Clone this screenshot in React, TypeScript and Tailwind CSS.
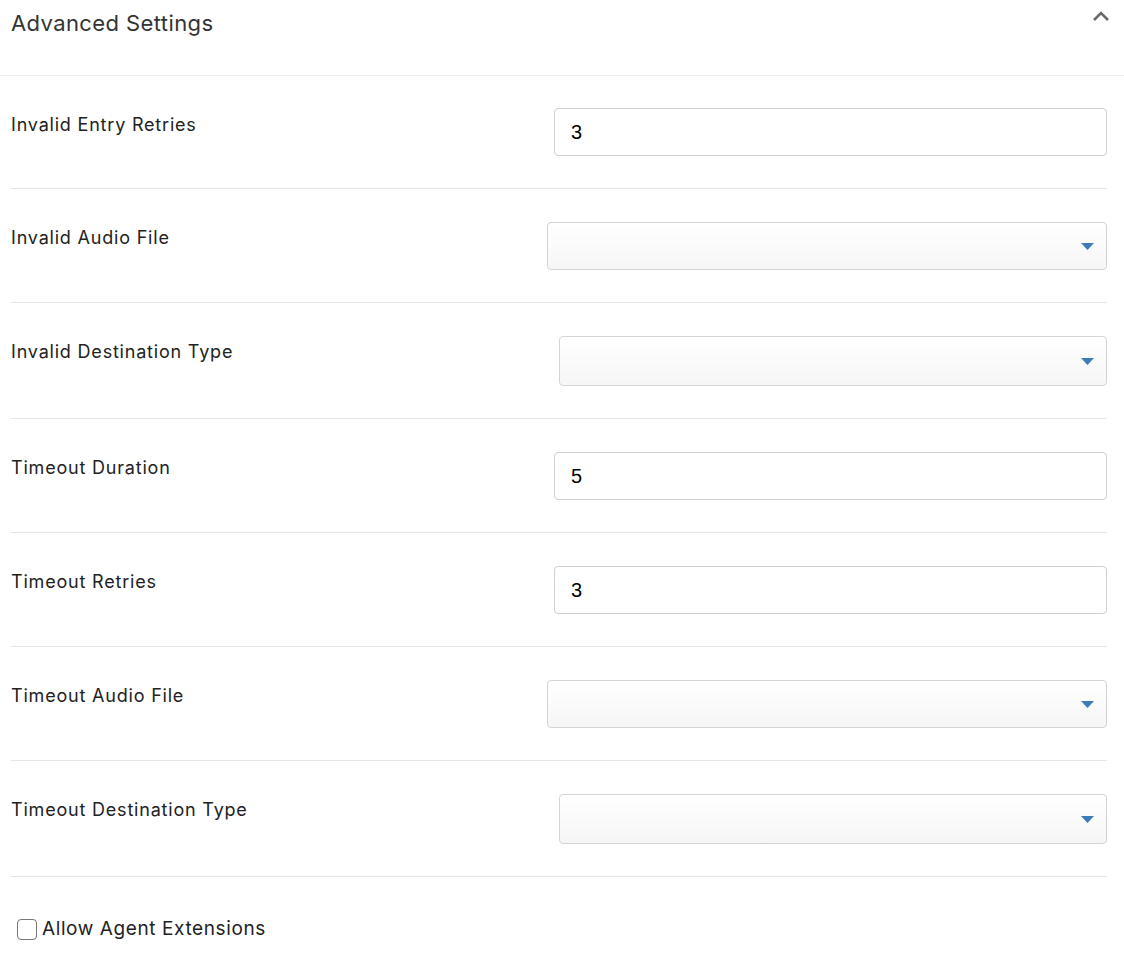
import { useState } from "react";

type Field = {
  label: string;
  kind: "input" | "select";
  value?: string;
  width: string;
  tall?: boolean;
};

const fields: Field[] = [
  { label: "Invalid Entry Retries", kind: "input", value: "3", width: "w-[553px]" },
  { label: "Invalid Audio File", kind: "select", width: "w-[560px]" },
  { label: "Invalid Destination Type", kind: "select", width: "w-[548px]", tall: true },
  { label: "Timeout Duration", kind: "input", value: "5", width: "w-[553px]" },
  { label: "Timeout Retries", kind: "input", value: "3", width: "w-[553px]" },
  { label: "Timeout Audio File", kind: "select", width: "w-[560px]" },
  { label: "Timeout Destination Type", kind: "select", width: "w-[548px]", tall: true },
];

const Caret = () => (
  <svg width="13" height="7" viewBox="0 0 13 7" className="shrink-0">
    <path d="M0 0h13L6.5 7z" fill="#3c7bb5" />
  </svg>
);

const App = () => {
  const [allow, setAllow] = useState(false);

  return (
    <div className="min-h-[958px] bg-white text-[#2b2b2b] font-['Inter',sans-serif]">
      {/* Header */}
      <div className="flex items-start justify-between h-[76px] border-b border-[#eeeeee] pl-[11px] pr-[14px]">
        <h2 className="text-[22px] leading-[30px] pt-[8px] tracking-[0.4px] text-[#333]">Advanced Settings</h2>
        <svg width="18" height="12" viewBox="0 0 18 12" className="mt-[10px]">
          <path d="M2 10l7-7 7 7" fill="none" stroke="#6b6b6b" strokeWidth="2.6" />
        </svg>
      </div>

      <div className="px-[11px] w-[1118px]">
        {fields.map((f, i) => (
          <div key={f.label} className="flex items-start justify-between border-b border-[#e6e6e6] pb-8">
            <div className="text-[18px] leading-[26px] pt-[36px] tracking-[0.8px] text-[#222]">{f.label}</div>
            {f.kind === "input" ? (
              <div className={`${i === 0 ? "pt-8" : "pt-[33px]"}`}>
                <div className={`${f.width} h-12 border border-[#cfcfcf] rounded-[4px] flex items-center pl-4 text-[20px] text-black font-['Liberation_Sans',sans-serif]`}>
                  {f.value}
                </div>
              </div>
            ) : (
              <div className="pt-[33px]">
                <div
                  className={`${f.width} ${f.tall ? "h-[50px]" : "h-12"} border border-[#d4d4d4] rounded-[4px] flex items-center justify-end pr-3 bg-gradient-to-b from-white to-[#f6f6f6]`}
                >
                  <Caret />
                </div>
              </div>
            )}
          </div>
        ))}

        <label className="flex items-center gap-[5px] pt-[38px] pl-[6px] cursor-pointer">
          <span
            onClick={() => setAllow(!allow)}
            className="w-[20px] h-[21px] border-[1.5px] border-[#777] rounded-[4px] bg-white"
          />
          <span className="text-[19px] leading-[28px] tracking-[0.6px] text-[#222]">Allow Agent Extensions</span>
        </label>
      </div>
    </div>
  );
};

export default App;
